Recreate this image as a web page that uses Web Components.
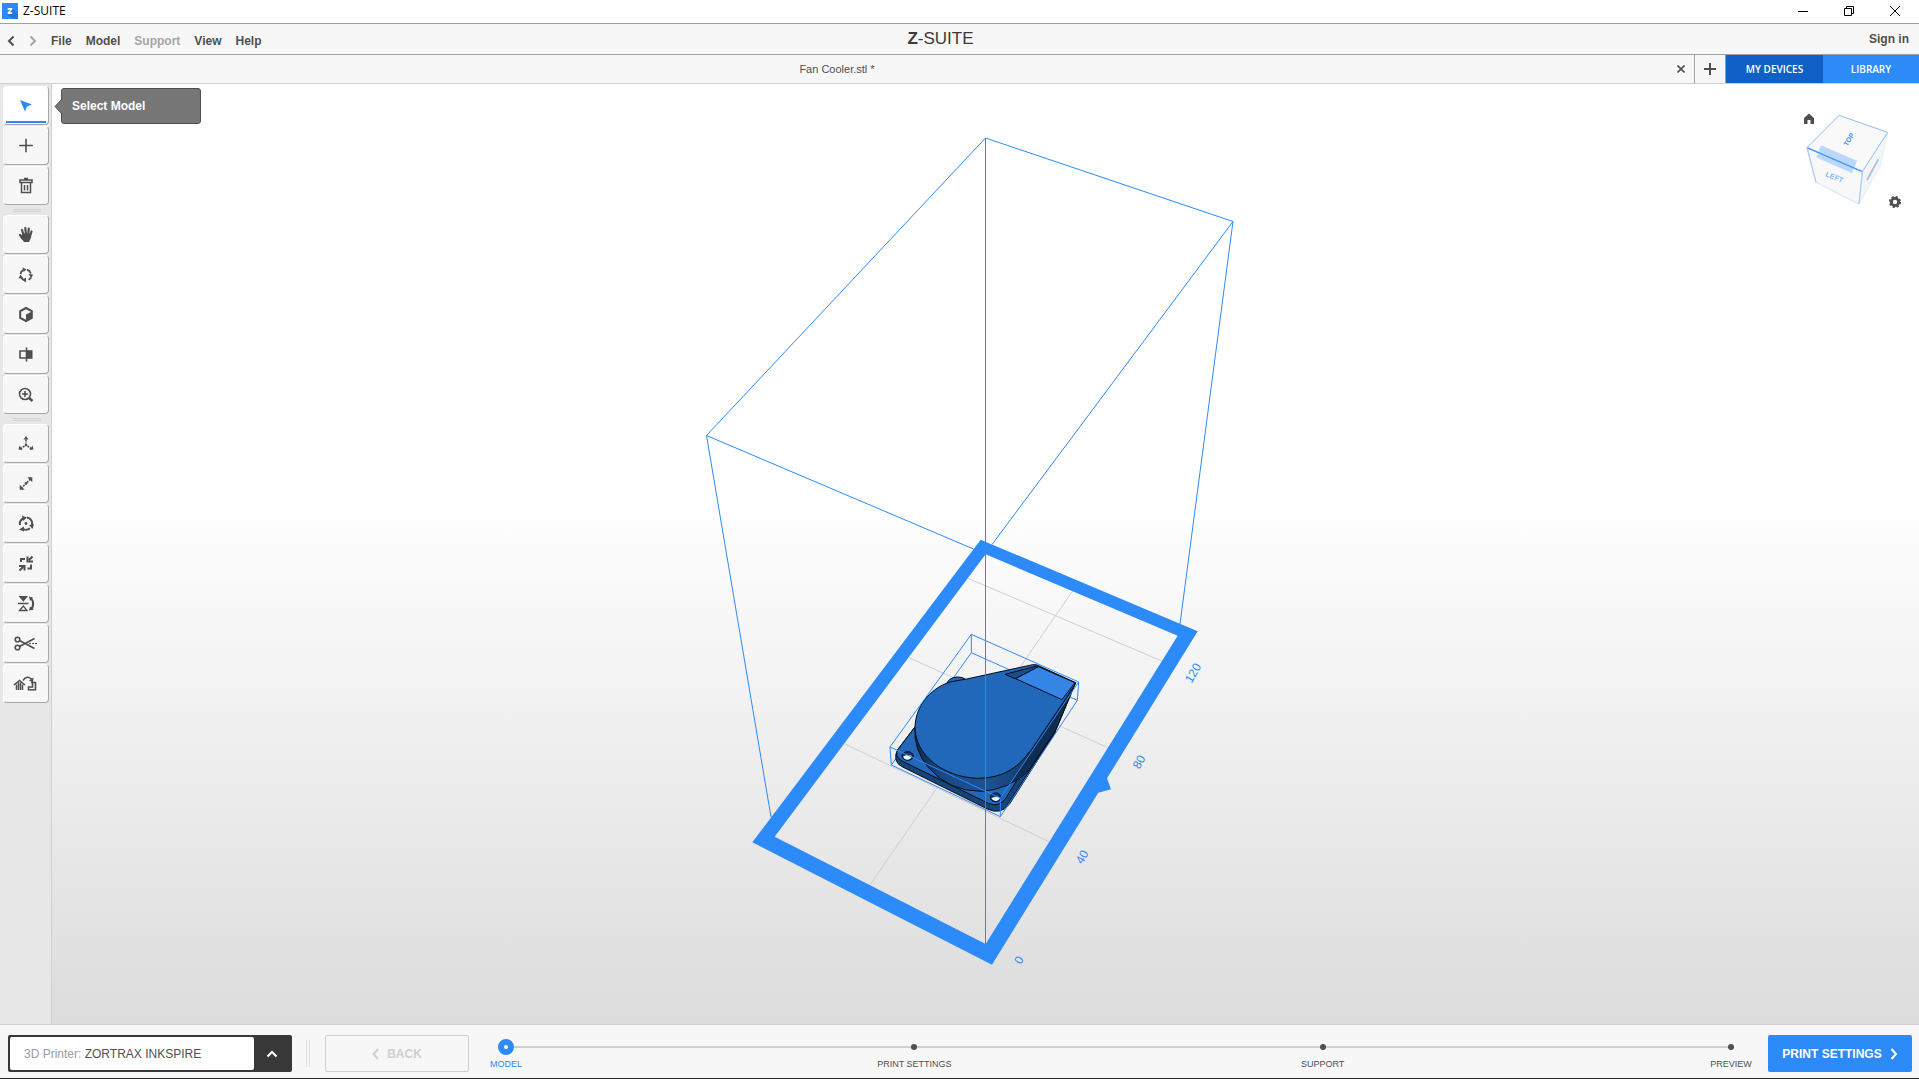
<!DOCTYPE html>
<html lang="en">
<head>
<meta charset="utf-8">
<title>Z-SUITE</title>
<style>
  html, body { margin: 0; height: 100%; }
  body {
    --blue: #2d8af9; --ink: #4f4f4f; --bar: #f7f7f7; --line: #cfcfcf;
    font: 12px/16px "Liberation Sans", Arial, sans-serif; color: var(--ink); overflow: hidden;
  }
</style>
</head>
<body>
<z-app></z-app>

<script>
const BASE = `<style>
  *, *::before { box-sizing: border-box; }
  button, select { font: inherit; color: inherit; background: none; border: 0; padding: 0; margin: 0; cursor: pointer; }
  button { display: flex; align-items: center; justify-content: center; }
  svg { display: block; }
</style>`;

function define(name, markup) {
  const template = document.createElement('template');
  template.innerHTML = BASE + markup;
  customElements.define(name, class extends HTMLElement {
    constructor() {
      super();
      this.attachShadow({ mode: 'open' }).append(template.content.cloneNode(true));
    }
  });
}

define('z-titlebar', `<style>
  :host { box-sizing: border-box; display: flex; align-items: center; height: 24px; flex: none; padding: 0 1px 1px 2px; background: #fff; border-bottom: 1px solid #a0a0a0; color: #000; font-family: "Open Sans", "Noto Sans", sans-serif; }
  .name { flex: 1; padding-left: 5px; }
  button { width: 46px; height: 20px; }
</style>
<svg width="16" height="16" viewBox="0 0 16 16" aria-hidden="true"><path fill="#2d8af9" d="M0 0h16v16H0z"/><path fill="#2577d8" d="M10 5l6 6v5h-5l-6-5z"/><path fill="#fff" d="M5.700 5h4.600v1.500L7.800 9.300h2.500V11H5.700V9.500l2.500-2.800H5.700z"/></svg>
<span class="name">Z-SUITE</span>
<button aria-label="Minimize"><svg width="12" height="12"><path d="M1 6.500h10" stroke="#000"/></svg></button>
<button aria-label="Restore"><svg width="12" height="12" fill="none" stroke="#000"><path d="M1.500 3.500h7v7h-7zM3.500 3.500v-2h7v7h-2"/></svg></button>
<button aria-label="Close"><svg width="12" height="12" stroke="#000"><path d="M1 1l10 10M11 1L1 11"/></svg></button>`);

define('z-menubar', `<style>
  :host { box-sizing: border-box; display: grid; grid-template-columns: 1fr auto 1fr 38px; align-items: center; height: 31px; flex: none; background: var(--bar); border-bottom: 1px solid #a0a0a0; font-weight: bold; }
  nav { display: flex; align-items: center; gap: 14px; padding-top: 3px; }
  .arrows { display: flex; }
  .arrows button { width: 22px; height: 20px; }
  .arrows { margin-right: -7px; }
  .off { color: #a6a6a6; }
  .logo { font: 17px/24px "Liberation Sans Narrow", "Liberation Sans", sans-serif; color: #3a3a3a; }
  .logo b { font-family: "Liberation Sans", sans-serif; }
  .sign { grid-column: 3 / 5; justify-self: end; margin-right: 10px; }
</style>
<nav>
  <span class="arrows">
    <button aria-label="Previous"><svg width="8" height="12" fill="none" stroke="#4f4f4f" stroke-width="2"><path d="M6.500 1.500L2 6l4.500 4.500"/></svg></button>
    <button aria-label="Next"><svg width="8" height="12" fill="none" stroke="#a6a6a6" stroke-width="2"><path d="M1.500 1.500L6 6l-4.500 4.500"/></svg></button>
  </span>
  <button>File</button><button>Model</button><button class="off" disabled>Support</button><button>View</button><button>Help</button>
</nav>
<span class="logo"><b>Z</b>-SUITE</span>
<button class="sign">Sign in</button>`);

define('z-tabbar', `<style>
  :host { box-sizing: border-box; display: flex; height: 29px; flex: none; background: var(--bar); border-bottom: 1px solid var(--line); font-size: 11px; }
  .tab { flex: 1; display: flex; align-items: center; border-right: 1px solid #a0a0a0; }
  .title { flex: 1; text-align: center; }
  .close { width: 14px; height: 14px; margin-right: 6px; }
  .add { width: 31px; border-right: 1px solid #a0a0a0; }
  .panel { width: 96px; background: var(--blue); color: #fff; font: 600 10px/16px "Open Sans", sans-serif; }
  .mine { width: 97px; background: #1060c6; }
</style>
<div class="tab"><span class="title">Fan Cooler.stl *</span>
<button class="close" aria-label="Close tab"><svg width="8" height="8" stroke="#4f4f4f" stroke-width="1.600"><path d="M.500.500l7 7M7.500.500l-7 7"/></svg></button></div>
<button class="add" aria-label="New tab"><svg width="12" height="12" stroke="#4f4f4f" stroke-width="2"><path d="M6 0v12M0 6h12"/></svg></button>
<button class="panel mine">MY DEVICES</button><button class="panel">LIBRARY</button>`);

define('z-tool', `<style>
  :host { display: block; height: 39px; flex: none; }
  button { width: 100%; height: 100%; background: #f7f7f7; border: 1px solid #fff; border-right-color: #a8a8a8; border-bottom-color: #a8a8a8; border-radius: 4px; position: relative; }
  :host([active]) button { background: #fff; }
  :host([active]) button::before { content: ""; position: absolute; left: 2px; right: 2px; bottom: 1px; height: 2px; background: var(--blue); }
</style><button><slot></slot></button>`);

define('z-toolbar', `<style>
  :host { box-sizing: border-box; display: flex; flex-direction: column; gap: 1px; width: 52px; flex: none; padding: 2px 2px 0 3px; background: #e7e7e7; border-right: 1px solid var(--line); }
  hr { width: 28px; height: 3px; margin: 3px 10px 2px; border: 1px solid #d2d2d2; border-width: 1px 0; }
  z-tool > svg { width: 28px; height: 29px; fill: #4f4f4f; stroke: #4f4f4f; stroke-width: 0; }
  .l { fill: none; stroke-width: 1.600; }
</style>
<z-tool active title="Select Model"><svg viewBox="-14 -14.500 28 29"><path fill="#2d8af9" d="M-6-5.500L6-1 .8.900-1 6z"/></svg></z-tool>
<z-tool title="Add Model"><svg viewBox="-14 -14.500 28 29"><path class="l" d="M0-6.800V6.800M-6.800 0H6.800"/></svg></z-tool>
<z-tool title="Delete"><svg viewBox="-14 -14.500 28 29"><path class="l" d="M-6-5.500H6V-3H-6zM-4.500-3V7H4.500V-3M-1.500-.500V5M1.500-.500V5M-2-7H2" style="stroke-width:1.500"/></svg></z-tool>
<hr>
<z-tool title="Move View"><svg viewBox="-14 -14.500 28 29"><path class="l" stroke-linecap="round" style="stroke-width:2.200" d="M-2 2l-2-6.500M0 1l-.700-7.500M2 1l.800-6.800M4 2l1.500-5M-3.500 4L-6 .500"/><path d="M-3.800-1H4.800L5 3 3 7.500H-2L-5 3z"/></svg></z-tool>
<z-tool title="Rotate View"><svg viewBox="-14 -14.500 28 29"><path class="l" style="stroke-width:1.800" d="M-5.500-.500A6 6 0 0 1-3-4.500M1-4.800A5.500 5.500 0 0 1 4.800-1M5 3A6 6 0 0 1 2.500 5.300M-1 5.500A6 6 0 0 1-5 3"/><path d="M-3.500-7.200L.500-5-2.500-2.500zM2.500-.500L7 0 5.500 3.500zM0 3v5L-3.500 5.500zM-7.500 4l2-4 2.500 3.500z"/></svg></z-tool>
<z-tool title="View Mode"><svg viewBox="-14 -14.500 28 29"><path class="l" style="stroke-width:2" d="M0-6.500L5.800-3.300V3.300L0 6.500-5.800 3.300V-3.300z"/><path d="M0 0L6-3V3.500L0 7z"/></svg></z-tool>
<z-tool title="Section"><svg viewBox="-14 -14.500 28 29"><path class="l" d="M0-3.500H-6V3.500H0M.500-7V7"/><path d="M.500-4.300H6.500V4.300H.500z"/></svg></z-tool>
<z-tool title="Zoom"><svg viewBox="-14 -14.500 28 29"><circle cx="-1" cy="-.500" r="5.500" class="l"/><path class="l" d="M-1-3.500V2.500M-4-.500H2"/><path class="l" style="stroke-width:2.500" d="M3 3.500L6.500 6.500"/></svg></z-tool>
<hr>
<z-tool title="Move"><svg viewBox="-14 -14.500 28 29"><path class="l" stroke-dasharray="2 1" d="M0-4V0M-1.500 2.500L-5 5M1.500 2.500L5 5"/><circle cy="1.500" r="1.300"/><path d="M-2.500-4L0-7.500 2.500-4zM-7.500 6l1-4 3 4.500zM7.500 6l-1-4-3 4.500z"/></svg></z-tool>
<z-tool title="Scale"><svg viewBox="-14 -14.500 28 29"><path class="l" stroke-dasharray="2 1" d="M-5 5L-1 1M1-1L5-5"/><circle r="1.400"/><path d="M6.300-6.300v5l-5-5zM-6.300 6.300v-5l5 5z"/></svg></z-tool>
<z-tool title="Rotate"><svg viewBox="-14 -14.500 28 29"><path class="l" style="stroke-width:2" d="M-6 1.500A6 6 0 0 1-3-5M1-6A6 6 0 0 1 6 1.500M4 4.800A6 6 0 0 1-4 4.800"/><circle r="1.400"/><path d="M-4-8L1-6-3-2.500zM3 1.500L8 .500 6.500 5.500zM-2 3v5l-5-2z"/></svg></z-tool>
<z-tool title="Fit to Workspace"><svg viewBox="-14 -14.500 28 29"><path class="l" style="stroke-width:2" d="M-5-1.500V-4.500H-1M5 1V5H1.500M6.500-7L3-3.500M-6.500 7L-3 3.500M1.500-7V-2H7M-7 2.500H-1.500V7"/></svg></z-tool>
<z-tool title="Mirror"><svg viewBox="-14 -14.500 28 29"><path d="M-7.500-7.500H2L-2.700-1.800zM3-7L7-6 4-2.500zM3 7L8 6 4 3z"/><path class="l" style="stroke-width:1.300" d="M-8 0H2.500M-6.500 7H1L-2.700 2.500z"/><path class="l" style="stroke-width:2" d="M5-5.500Q9 0 5.500 5.500"/></svg></z-tool>
<z-tool title="Split"><svg viewBox="-14 -14.500 28 29"><circle class="l" cx="-8.500" cy="-4" r="2.300"/><circle class="l" cx="-8.500" cy="4" r="2.300"/><path class="l" d="M-6.500-3L8.500 5M-6.500 3L8.500-5"/><path class="l" stroke-dasharray="2 1" style="stroke-width:1" d="M3 0H12"/></svg></z-tool>
<z-tool title="Platform Orientation"><svg viewBox="-14 -14.500 28 29"><path class="l" style="stroke-width:1.500" d="M-12 1.500L-6.500-3-1 1.500M-9.500 1V6.500M-7.500-1V6.500M-5.500-1V6.500M-3.500 1V6.500"/><path class="l" d="M-3-3Q1-9 6-4M5-1H9.500V6.300H2.500V3.500H6.500V-1"/><path d="M3-3L7.500-6 7-1z"/></svg></z-tool>`);

define('z-tooltip', `<style>
  :host { box-sizing: border-box; display: flex; align-items: center; width: 140px; height: 36px; padding: 0 10px; background: #777; border: 1px solid #505050; border-radius: 3px; color: #fff; font-weight: bold; }
  svg { position: absolute; left: -8px; top: 10px; }
</style><svg width="8" height="15"><path d="M8 0L1 7.500 8 15" fill="#777" stroke="#505050"/></svg><slot></slot>`);

define('z-cube', `<style>
  :host { display: block; width: 120px; height: 100px; }
  button { position: absolute; width: 14px; height: 14px; }
  .home { left: 3px; top: 2px; } .gear { left: 89px; top: 85px; }
  text { font-family: "Liberation Sans", sans-serif; fill: #4796f5; }
</style>
<svg width="120" height="100" viewBox="477 330 360 300">
  <g stroke-linejoin="round">
  <path d="M501 443L667 515 657 612 528 547z" fill="#f8f8f9" stroke="#cfe3fb" stroke-width="3"/>
  <path d="M667 515L743 397 720 500 657 612z" fill="#f5f5f6" stroke="#e3eefb" stroke-width="3"/>
  <path d="M597 346L743 397 667 515 501 443z" fill="#f9f9fa" stroke="#8dbffa" stroke-width="3"/>
  <path d="M543 436L651 482 636 520 529 472z" fill="#b9d8fb"/>
  <path d="M501 443L667 515" stroke="#4796f5" stroke-width="4"/><path d="M501 443L528 547M667 515L657 612" stroke="#a9d0fb" stroke-width="4"/>
  <path d="M681 540L715 478" stroke="#a7bfe0" stroke-width="5"/></g>
  <text transform="translate(626 418) rotate(-58)" text-anchor="middle" y="8" font-size="21" font-weight="bold">TOP</text>
  <text transform="translate(583 532) rotate(22)" text-anchor="middle" y="7" font-size="22" font-weight="bold" style="fill:#83b8f9">LEFT</text>
</svg>
<button class="home" aria-label="Home view"><svg width="12" height="12"><path fill="#4f4f4f" d="M6 .500l5 4.500V11H7.500V7h-3v4H1V5z"/></svg></button>
<button class="gear" aria-label="View settings"><svg width="14" height="14" viewBox="-7 -7 14 14"><circle r="3.600" fill="none" stroke="#4f4f4f" stroke-width="2.800"/><circle r="5.200" fill="none" stroke="#4f4f4f" stroke-width="1.800" stroke-dasharray="2.200 1.884"/></svg></button>`);

define('z-scene', `<style>
  :host { display: block; position: relative; flex: 1; min-width: 0; background: linear-gradient(#fff 44%, #dcdcdc); }
  .world { width: 100%; height: 100%; }
  z-tooltip { position: absolute; left: 9px; top: 4px; }
  z-cube { position: absolute; right: 0; top: 26px; }
  text { fill: #2d8af9; font-size: 12px; font-family: "Liberation Sans", sans-serif; text-anchor: middle; }
</style>
<svg class="world" viewBox="52 84 1867 940" role="img" aria-label="Build volume with fan cooler model">
  <defs>
    <linearGradient id="side" x1="0" x2="1"><stop offset="0" stop-color="#0d2a4e"/><stop offset=".18" stop-color="#1a4a85"/><stop offset=".45" stop-color="#1c5296"/><stop offset=".75" stop-color="#133660"/><stop offset="1" stop-color="#0b2240"/></linearGradient>
  </defs>
  <g transform="translate(740 530) scale(.33333)">
    <path d="M684 145L1265 393M507 383L1105 654M315 642L929 936M997 184L390 1065" stroke="#cecece" stroke-width="3" fill="none"/>
    <path fill="#2d8af9" fill-rule="evenodd" d="M722 29L1373 304 1101 745 1113 778 1075 788 756 1304 37 937zM737 73L104 920 737 1242 1313 317z"/>
  </g>
  <path d="M985.500 138L1233 221.500 992 544.500M985.500 138L706.500 435.500 973.500 549M706.500 435.500L771 817M1233 221.500L1180 624" fill="none" stroke="#2d8af9"/>
  <g transform="translate(870 620) scale(.33333)" stroke-linejoin="round">
    <path d="M304 43V98L622 241M304 98L64 435" fill="none" stroke="#2d8af9" stroke-width="3"/>
    <g stroke="#050d18" stroke-width="3">
      <path fill="#2268ba" d="M228 196Q236 171 262 171 278 170 290 180z"/>
      <path fill="#184378" d="M134 322L84 388Q74 402 78 420 82 434 98 441L352 567Q392 586 418 553L556 338 560 300z"/>
      <path fill="#2267b8" d="M134 322L84 388Q72 408 96 423L355 550Q388 564 408 534L520 350z"/>
      <path fill="url(#side)" d="M135 320Q130 390 175 442 235 514 335 514 415 508 470 458L555 335 617 188 480 300z"/>
      <path fill="#0f2c52" stroke="none" d="M617 190L558 328 470 456 420 490 455 435 482 392z"/>
      <path fill="#2268ba" stroke="none" d="M135 320C137 262 176 207 240 186L290 177 488 134Q500 132 510 139L617 188 480 392C440 450 390 475 320 475 218 470 135 405 135 320z"/>
      <path fill="none" d="M617 188L510 139Q500 132 488 134L290 177 240 186C176 207 137 262 135 320 135 405 218 470 320 475 390 475 440 450 478 395"/>
      <path fill="#194d8d" d="M405 163L500 138 506 142 435 176z"/>
      <path fill="#3585e6" d="M505 140L615 188 576 239 437 176z"/>
      <path fill="none" stroke-width="2" stroke-dasharray="6 4" d="M606 208L482 392"/>
      <path fill="none" d="M617 188L558 330 412 555"/>
      <ellipse cx="113" cy="408" rx="17" ry="13" fill="#123a6b"/><ellipse cx="377" cy="532" rx="16" ry="13" fill="#123a6b"/>
    </g>
    <path fill="#f5f5f5" d="M99 410Q112 400 126 409 122 419 112 419 102 418 99 410zM364 535Q376 526 390 533 386 543 376 543 367 542 364 535z"/>
    <path d="M304 43L626 186 391 534 60 381zM60 381L64 435 391 590V534M391 590L622 241 626 186" fill="none" stroke="#2d8af9" stroke-width="3"/>
  </g>
  <path d="M985.500 138V944" stroke="#2d8af9"/>
  <text transform="translate(1193 673) rotate(-60)" y="4">120</text>
  <text transform="translate(1139 762) rotate(-60)" y="4">80</text>
  <text transform="translate(1082 857) rotate(-60)" y="4">40</text>
  <text transform="translate(1019 960) rotate(-60)" y="4">0</text>
</svg>
<z-tooltip>Select Model</z-tooltip><z-cube></z-cube>`);

define('z-step', `<style>
  :host { display: flex; justify-content: center; width: 0; font-size: 9px; line-height: 12px; white-space: nowrap; }
  button { flex-direction: column; justify-content: flex-start; flex: none; gap: 1px; }
  .mark { display: flex; align-items: center; height: 20px; }
  .mark::before { content: ""; width: 6px; height: 6px; border-radius: 50%; background: #4f4f4f; }
  :host([current]) { color: var(--blue); }
  :host([current]) .mark::before { width: 16px; height: 16px; background: #fff; border: 6px solid var(--blue); }
</style><button><span class="mark"></span><slot></slot></button>`);

define('z-statusbar', `<style>
  :host { box-sizing: border-box; display: flex; align-items: center; height: 55px; flex: none; padding: 4px 7px 0 8px; background: var(--bar); border-top: 1px solid var(--line); border-bottom: 1px solid #2a2a2a; }
  .printer { display: flex; align-items: center; width: 284px; height: 37px; background: #383838; border: 2px solid #383838; border-radius: 2px; position: relative; }
  .field { display: flex; align-items: center; width: 244px; height: 33px; padding-left: 14px; background: #fff; border-radius: 2px; }
  label { color: #9c9c9c; white-space: pre; }
  select { flex: 1; min-width: 0; appearance: none; height: 33px; }
  .up { margin: 0 auto; }
  .grip { width: 4px; height: 27px; margin: 0 15px 0 14px; border: 1px solid #dedede; border-width: 0 1px; }
  .back { width: 144px; height: 37px; gap: 8px; border: 1px solid #cfcfcf; border-radius: 2px; color: #cfcfcf; font-weight: bold; }
  .next { width: 144px; height: 37px; gap: 8px; background: var(--blue); color: #fff; border-radius: 2px; font-weight: bold; }
  .steps { flex: 1; display: flex; justify-content: space-between; margin: 2px 37px 0; height: 35px; background: linear-gradient(#cfcfcf, #cfcfcf) 0 9px / 100% 2px no-repeat; }
</style>
<div class="printer"><div class="field"><label for="p">3D Printer: </label><select id="p"><option>ZORTRAX INKSPIRE</option></select></div>
<svg class="up" width="12" height="8" fill="none" stroke="#fff" stroke-width="2"><path d="M1.500 6.500L6 2l4.500 4.500"/></svg></div>
<span class="grip"></span>
<button class="back" disabled><svg width="7" height="12" fill="none" stroke="#cfcfcf" stroke-width="2"><path d="M6 1L1.500 6 6 11"/></svg>BACK</button>
<nav class="steps"><z-step current>MODEL</z-step><z-step>PRINT SETTINGS</z-step><z-step>SUPPORT</z-step><z-step>PREVIEW</z-step></nav>
<button class="next">PRINT SETTINGS<svg width="8" height="12" fill="none" stroke="#fff" stroke-width="2"><path d="M1.500 1L6 6l-4.500 5"/></svg></button>`);

define('z-app', `<style>
  :host { display: flex; flex-direction: column; height: 100vh; }
  main { flex: 1; display: flex; min-height: 0; }
</style>
<z-titlebar></z-titlebar><z-menubar></z-menubar><z-tabbar></z-tabbar>
<main><z-toolbar></z-toolbar><z-scene></z-scene></main>
<z-statusbar></z-statusbar>`);
</script>
</body>
</html>
